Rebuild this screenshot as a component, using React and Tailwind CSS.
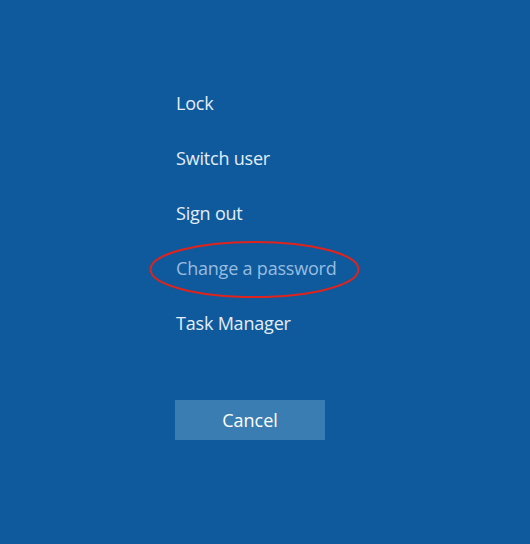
export default function App() {
  const items = ["Lock", "Switch user", "Sign out", "Change a password", "Task Manager"];
  return (
    <div className="relative w-[530px] h-[544px] bg-[#0e5a9d] overflow-hidden" style={{ fontFamily: '"Open Sans", "Noto Sans", sans-serif' }}>
      <div className="flex flex-col pl-[176px] pt-[76px]">
        {items.map((t) => (
          <div
            key={t}
            className={`h-[55px] flex items-center text-[18px] tracking-[-0.2px] ${t === "Change a password" ? "text-[#98bde0]" : "text-[#e4edf6]"}`}
          >
            {t}
          </div>
        ))}
        <div className="mt-[49px] -ml-px w-[150px] h-[40px] bg-[#3a7db2] flex items-center justify-center text-[18px] text-white">
          Cancel
        </div>
      </div>
      <svg className="absolute left-0 top-0 pointer-events-none" width="530" height="544">
        <ellipse cx="254.5" cy="269.5" rx="104" ry="27.5" fill="none" stroke="#e0231c" strokeWidth="2" />
      </svg>
    </div>
  );
}
